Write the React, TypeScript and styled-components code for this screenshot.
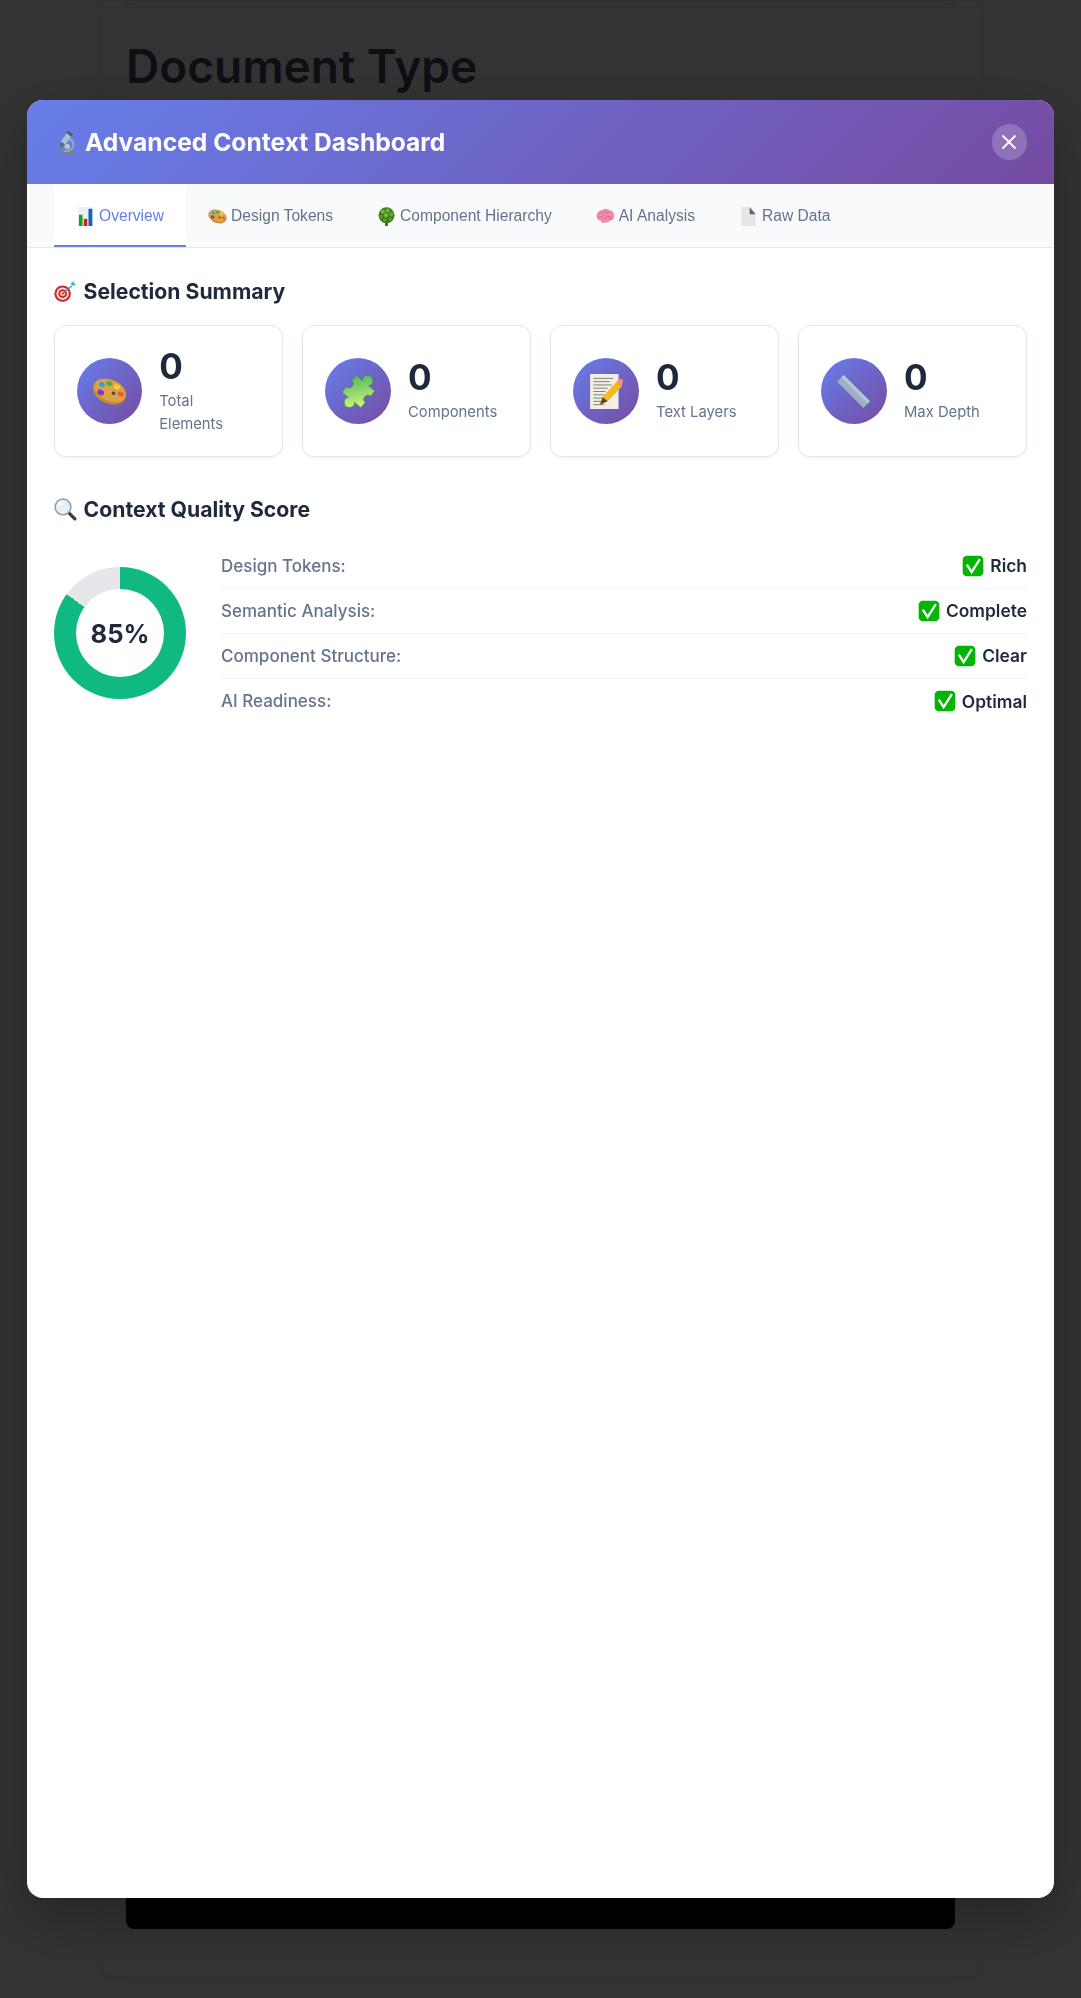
import * as React from 'react';
import styled, { createGlobalStyle } from 'styled-components';

const GlobalStyle = createGlobalStyle`
  html, body {
    margin: 0;
    padding: 0;
    background: #fff;
    font-family: Inter, "Liberation Sans", sans-serif;
  }
  * {
    box-sizing: border-box;
  }
`;

const Page = styled.div`
  height: 1998px;
  overflow: hidden;
  background: #fff;
  padding: 0 99px;
`;

const PageCard = styled.div`
  height: 1977px;
  padding: 0 26px;
  background: #fff;
  border-radius: 0 0 14px 14px;
  border: 1px solid #f1f1f1;
  box-shadow: 0 4px 12px rgba(0, 0, 0, 0.04);
`;

const PreviewTop = styled.div`
  height: 7px;
  border: 1px solid #e6e6e6;
  border-top: 0;
  border-radius: 0 0 12px 12px;
`;

const DocHeading = styled.h1`
  margin: 29px 0 0;
  font-size: 46px;
  line-height: 58px;
  font-weight: 600;
  color: #464b5f;
`;

const PreviewBlack = styled.div`
  height: 1800px;
  margin-top: 34px;
  background: #0a0a0a;
  border-radius: 0 0 8px 8px;
`;

const Overlay = styled.div`
  position: fixed;
  inset: 0;
  background: rgba(0, 0, 0, 0.8);
  display: flex;
  align-items: center;
  justify-content: center;
`;

const Modal = styled.div`
  width: 95%;
  height: 90%;
  background: #fff;
  border-radius: 16px;
  overflow: hidden;
  display: flex;
  flex-direction: column;
  box-shadow: 0 20px 60px rgba(0, 0, 0, 0.3);
`;

const ModalHeader = styled.header`
  height: 84px;
  flex-shrink: 0;
  display: flex;
  align-items: center;
  justify-content: space-between;
  padding: 0 27px;
  background: linear-gradient(135deg, #667eea 0%, #764ba2 100%);
  color: #fff;
`;

const ModalTitle = styled.h2`
  margin: 1px 0 0;
  display: flex;
  align-items: center;
  gap: 6px;
  font-size: 24.6px;
  font-weight: 700;
  line-height: 38px;
`;

const CloseButton = styled.button`
  width: 35px;
  height: 36px;
  padding: 0;
  border: 0;
  border-radius: 50%;
  background: rgba(255, 255, 255, 0.2);
  color: #fff;
  display: flex;
  align-items: center;
  justify-content: center;
`;

const TabBar = styled.nav`
  flex-shrink: 0;
  height: 64px;
  display: flex;
  padding: 0 27px;
  background: #f8fafc;
  border-bottom: 1px solid #e2e8f0;
`;

const Tab = styled.div<{ $active?: boolean }>`
  height: 63px;
  padding: 4px 22px 0;
  display: flex;
  align-items: center;
  gap: 4px;
  font-family: "Liberation Sans", Arial, sans-serif;
  font-size: 15.6px;
  color: ${(p) => (p.$active ? '#667eea' : '#64748b')};
  background: ${(p) => (p.$active ? '#fff' : 'transparent')};
  border-bottom: 2px solid ${(p) => (p.$active ? '#667eea' : 'transparent')};
`;

const Content = styled.main`
  flex: 1;
  padding: 27px;
`;

const SectionTitle = styled.h3`
  margin: 0 0 17px;
  display: flex;
  align-items: center;
  gap: 6.5px;
  font-size: 21.2px;
  font-weight: 700;
  line-height: 33px;
  color: #1e293b;
`;

const StatGrid = styled.div`
  display: grid;
  grid-template-columns: repeat(4, 1fr);
  gap: 19px;
  margin-bottom: 36px;
`;

const StatCard = styled.div`
  display: flex;
  align-items: center;
  gap: 17px;
  padding: 23px 22px 20px;
  background: #fff;
  border: 1px solid #e2e8f0;
  border-radius: 12px;
  box-shadow: 0 1px 3px rgba(0, 0, 0, 0.05);
`;

const StatIcon = styled.div`
  width: 66px;
  height: 66px;
  margin-bottom: 2px;
  border-radius: 50%;
  background: linear-gradient(135deg, #667eea 0%, #764ba2 100%);
  display: flex;
  align-items: center;
  justify-content: center;
`;

const StatValue = styled.div`
  font-size: 35px;
  font-weight: 700;
  line-height: 35px;
  color: #1e293b;
`;

const StatLabel = styled.div`
  margin-top: 6px;
  font-size: 14.8px;
  line-height: 23px;
  color: #64748b;
`;

const QualityRow = styled.div`
  display: flex;
  align-items: center;
  gap: 35px;
`;

const Donut = styled.div`
  flex-shrink: 0;
  width: 132px;
  height: 132px;
  border-radius: 50%;
  background: conic-gradient(#10b981 0% 85%, #e5e7eb 85% 100%);
  display: flex;
  align-items: center;
  justify-content: center;
`;

const DonutHole = styled.div`
  width: 88px;
  height: 88px;
  border-radius: 50%;
  background: #fff;
  display: flex;
  align-items: center;
  justify-content: center;
  font-size: 25.6px;
  font-weight: 700;
  color: #1e293b;
`;

const MetricList = styled.div`
  flex: 1;
  padding-top: 1px;
`;

const MetricRow = styled.div`
  display: flex;
  align-items: center;
  justify-content: space-between;
  height: 45px;
  font-size: 17px;
  border-bottom: 1px solid #f1f5f9;

  &:last-child {
    border-bottom: 0;
  }
`;

const MetricLabel = styled.span`
  font-weight: 500;
  color: #64748b;
`;

const MetricValue = styled.span`
  display: flex;
  align-items: center;
  gap: 6px;
  font-size: 17.4px;
  font-weight: 600;
  color: #1e293b;
`;

const Emoji: React.FC<{ name: string; size: number }> = ({ name, size }) => (
  <svg width={size} height={size} viewBox="0 0 32 32" style={{ flexShrink: 0 }} role="img" aria-label={name}>
    {icons[name]}
  </svg>
);

const icons: Record<string, React.ReactNode> = {
  microscope: (
    <>
      <path d="M5 27h22l2 4H3z" fill="#75838f" />
      <path d="M19 10c6 1 8 6 7 10-.8 4-3.500 7-8 8h-6l.5-2.500h5c3.500-1 5.500-3 6-6 .5-3.500-2-6.500-6-7z" fill="#9aa8b2" />
      <circle cx="17" cy="21" r="3.500" fill="#b9c6cf" />
      <g transform="rotate(35 15 12)">
        <rect x="11" y="1" width="8" height="5" rx="1" fill="#50606e" />
        <rect x="11.500" y="5" width="7" height="13" fill="#a9c0d2" />
        <rect x="12.500" y="18" width="5" height="5" fill="#5c6a76" />
      </g>
    </>
  ),
  chart: (
    <>
      <rect x="3" y="0" width="26" height="32" fill="#eef1f2" />
      <rect x="5" y="13" width="6" height="19" fill="#12a41f" />
      <rect x="13" y="20" width="6" height="12" fill="#d5231c" />
      <rect x="21" y="3" width="6.500" height="29" fill="#1464c8" />
    </>
  ),
  palette: (
    <g transform="rotate(24 16 16)">
      <ellipse cx="16" cy="16" rx="16" ry="11" fill="#c98b2f" />
      <ellipse cx="16" cy="15" rx="15" ry="9.500" fill="#dca344" />
      <ellipse cx="7" cy="13" rx="2.800" ry="2.200" fill="#2f9fe0" />
      <ellipse cx="13" cy="9.500" rx="2.800" ry="2.200" fill="#3cb54a" />
      <ellipse cx="20.500" cy="9.500" rx="2.800" ry="2.200" fill="#f2d23a" />
      <ellipse cx="9" cy="20" rx="3.200" ry="2.500" fill="#8338c8" />
      <ellipse cx="26.500" cy="14" rx="2.800" ry="2.200" fill="#ef5a3c" />
      <ellipse cx="20" cy="16" rx="1.800" ry="1.500" fill="#4a4a5a" />
    </g>
  ),
  tree: (
    <>
      <rect x="13.500" y="25" width="5" height="7" fill="#7b5528" />
      <circle cx="16" cy="14" r="13.500" fill="#3f7d1a" />
      <circle cx="10" cy="8" r="3.500" fill="#76b636" />
      <circle cx="18" cy="6" r="3.500" fill="#76b636" />
      <circle cx="24" cy="12" r="3.500" fill="#6aa82c" />
      <circle cx="15" cy="14" r="3.500" fill="#80bf3c" />
      <circle cx="7" cy="16" r="3" fill="#5f9e26" />
      <circle cx="22" cy="20" r="3" fill="#5f9e26" />
      <circle cx="13" cy="22" r="3" fill="#5f9e26" />
    </>
  ),
  brain: (
    <>
      <path d="M1 15C1 9 6 5 11 5c3-2.500 8-2.500 11 0 5 0 9 5 9 10 0 5-4 8-8 8-1 3-5 4-7 2.500C13 28 9 27 8 23c-4 0-7-4-7-8z" fill="#ee8fac" />
      <path d="M6 11c2-2 5-2 7 0M14 6c1 4 6 5 9 3M4 17c3 1 7 0 8-3M16 14c3 3 7 3 11 1M12 21c1-2 4-3 6-2M22 20c1-1 3-1 4-1" stroke="#c4527a" strokeWidth="1.200" fill="none" />
    </>
  ),
  page: (
    <>
      <path d="M4 0h14l10 12v20H4z" fill="#e6e6e6" />
      <path d="M18 0l10 12H18z" fill="#666" />
    </>
  ),
  target: (
    <>
      <circle cx="12" cy="19" r="11.500" fill="#cf2a27" />
      <circle cx="12" cy="19" r="8.500" fill="#f5e9e4" />
      <circle cx="12" cy="19" r="6" fill="#cf2a27" />
      <circle cx="12" cy="19" r="3.400" fill="#f5e9e4" />
      <circle cx="12" cy="19" r="1.600" fill="#cf2a27" />
      <path d="M12 19L25 8" stroke="#4a8f9c" strokeWidth="1.800" />
      <path d="M23 4l3 4 5-1-3-2 0-3z" fill="#3cb4c6" />
    </>
  ),
  puzzle: (
    <>
      <defs>
        <linearGradient id="puzzleFill" x1="0" y1="0.2" x2="0.6" y2="1">
          <stop offset="0" stopColor="#4fb85c" />
          <stop offset="1" stopColor="#cdf07e" />
        </linearGradient>
      </defs>
      <path
        transform="rotate(40 16 16) translate(16 16) scale(1.25) translate(-16 -16)"
        d="M7 8h6a3.800 3.800 0 1 1 6 0h6v5a3 3 0 0 0 0 6v5h-6a3.800 3.800 0 1 1-6 0H7v-5a3 3 0 0 0 0-6z"
        fill="url(#puzzleFill)"
        stroke="#3f8f4a"
        strokeWidth="0.500"
      />
    </>
  ),
  memo: (
    <>
      <rect x="1" y="0" width="26" height="32" fill="#f2efe6" />
      <path d="M4 4h18M4 7h15M4 10h17M4 13h13M4 16h11M4 19h10M4 22h8M4 25h7M4 28h10" stroke="#77736a" strokeWidth="0.800" />
      <path d="M10 28l2.500-7L25 7l5 4.500L17 25z" fill="#f5b921" />
      <path d="M10 28l2.500-7 4.500 4z" fill="#5a4a32" />
      <path d="M25 7l2-2c1-1 2.500-1 3.500.2s1 2.300 0 3.300L30 11.500z" fill="#ef8f8a" />
    </>
  ),
  ruler: (
    <>
      <path d="M7 1L1 7l24 24 6-6z" fill="#9cb0c6" />
      <path d="M7 1l24 24-2 2L5 3z" fill="#b7c7d8" />
    </>
  ),
  magnifier: (
    <>
      <path d="M20 20l9 9" stroke="#3d3d3d" strokeWidth="4.500" strokeLinecap="round" />
      <circle cx="12.500" cy="12.500" r="11" fill="#e6eff5" stroke="#8f9aa3" strokeWidth="2" />
      <path d="M6 11c1-3 3-5 6-5" stroke="#fff" strokeWidth="2" fill="none" />
    </>
  ),
  check: (
    <>
      <rect x="1" y="1" width="30" height="30" rx="6" fill="#03b503" />
      <path d="M7 14l7 11L26 6" stroke="#fff" strokeWidth="3.400" fill="none" />
    </>
  ),
};

const tabs = [
  { icon: 'chart', label: 'Overview', active: true },
  { icon: 'palette', label: 'Design Tokens' },
  { icon: 'tree', label: 'Component Hierarchy' },
  { icon: 'brain', label: 'AI Analysis' },
  { icon: 'page', label: 'Raw Data' },
];

const stats = [
  { icon: 'palette', label: 'Total Elements' },
  { icon: 'puzzle', label: 'Components' },
  { icon: 'memo', label: 'Text Layers' },
  { icon: 'ruler', label: 'Max Depth' },
];

const metrics = [
  { label: 'Design Tokens:', value: 'Rich' },
  { label: 'Semantic Analysis:', value: 'Complete' },
  { label: 'Component Structure:', value: 'Clear' },
  { label: 'AI Readiness:', value: 'Optimal' },
];

const App: React.FC = () => (
  <>
    <GlobalStyle />
    <Page>
      <PageCard>
        <PreviewTop />
        <DocHeading>Document Type</DocHeading>
        <PreviewBlack />
      </PageCard>
    </Page>
    <Overlay>
      <Modal>
        <ModalHeader>
          <ModalTitle>
            <Emoji name="microscope" size={25} />
            Advanced Context Dashboard
          </ModalTitle>
          <CloseButton>
            <svg width="16" height="16" viewBox="0 0 16 16">
              <path d="M1.500 1.500l13 13M14.500 1.500l-13 13" stroke="#fff" strokeWidth="1.800" />
            </svg>
          </CloseButton>
        </ModalHeader>
        <TabBar>
          {tabs.map((tab) => (
            <Tab key={tab.label} $active={tab.active}>
              <Emoji name={tab.icon} size={19} />
              {tab.label}
            </Tab>
          ))}
        </TabBar>
        <Content>
          <SectionTitle>
            <Emoji name="target" size={23} />
            Selection Summary
          </SectionTitle>
          <StatGrid>
            {stats.map((stat) => (
              <StatCard key={stat.label}>
                <StatIcon>
                  <Emoji name={stat.icon} size={35} />
                </StatIcon>
                <div>
                  <StatValue>0</StatValue>
                  <StatLabel>{stat.label}</StatLabel>
                </div>
              </StatCard>
            ))}
          </StatGrid>
          <SectionTitle>
            <Emoji name="magnifier" size={23} />
            Context Quality Score
          </SectionTitle>
          <QualityRow>
            <Donut>
              <DonutHole>85%</DonutHole>
            </Donut>
            <MetricList>
              {metrics.map((m) => (
                <MetricRow key={m.label}>
                  <MetricLabel>{m.label}</MetricLabel>
                  <MetricValue>
                    <Emoji name="check" size={22} />
                    {m.value}
                  </MetricValue>
                </MetricRow>
              ))}
            </MetricList>
          </QualityRow>
        </Content>
      </Modal>
    </Overlay>
  </>
);

export default App;
